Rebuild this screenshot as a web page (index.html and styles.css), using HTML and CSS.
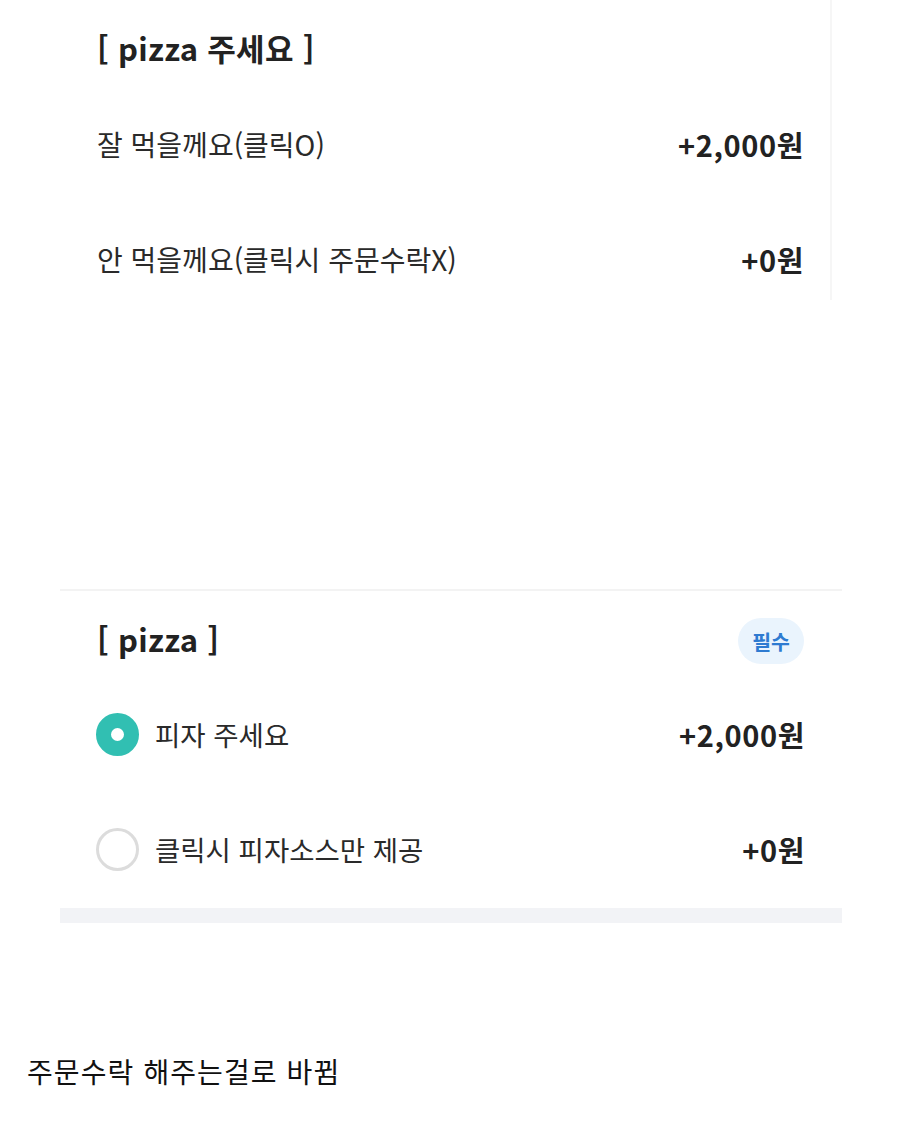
FILE: index.html
```html
<!DOCTYPE html>
<html lang="ko">
<head>
<meta charset="utf-8">
<link rel="stylesheet" href="styles.css">
</head>
<body>
<div class="page">
  <section class="shot shot-top">
    <h2 class="title">[ pizza 주세요 ]</h2>
    <div class="row row-first">
      <span class="label">잘 먹을께요(클릭O)</span>
      <span class="price">+2,000원</span>
    </div>
    <div class="row">
      <span class="label">안 먹을께요(클릭시 주문수락X)</span>
      <span class="price">+0원</span>
    </div>
  </section>

  <section class="shot shot-bottom">
    <div class="head">
      <h2 class="title">[ pizza ]</h2>
      <span class="badge">필수</span>
    </div>
    <div class="row radio-row">
      <span class="opt"><span class="radio on"></span><span class="label">피자 주세요</span></span>
      <span class="price">+2,000원</span>
    </div>
    <div class="row radio-row">
      <span class="opt"><span class="radio"></span><span class="label">클릭시 피자소스만 제공</span></span>
      <span class="price">+0원</span>
    </div>
    <div class="gray-bar"></div>
  </section>

  <p class="caption">주문수락 해주는걸로 바뀜</p>
</div>
</body>
</html>
```
FILE: styles.css
```css
html, body {
  margin: 0;
  padding: 0;
  background: #fff;
}
body {
  width: 900px;
  height: 1139px;
  overflow: hidden;
  font-family: "Noto Sans CJK KR", "Noto Sans", sans-serif;
  color: #222;
}
.page {
  display: flex;
  flex-direction: column;
}
.shot-top {
  width: 832px;
  height: 300px;
  box-sizing: border-box;
  padding: 24px 27px 0 97px;
  border-right: 2px solid #f6f6f6;
}
.title {
  margin: 0;
  font-size: 31px;
  font-weight: 700;
  line-height: 48px;
  letter-spacing: 0.3px;
  color: #222;
}
.row {
  display: flex;
  justify-content: space-between;
  align-items: center;
  height: 40px;
}
.shot-top .row-first {
  margin-top: 52px;
}
.shot-top .row + .row {
  margin-top: 75px;
}
.label {
  font-size: 28px;
  font-weight: 400;
  color: #2a2a2a;
}
.radio-row .label {
  font-size: 27.5px;
}
.price {
  font-size: 29px;
  font-weight: 700;
  color: #222;
  letter-spacing: 0.6px;
  margin-right: -1px;
}
.shot-bottom {
  margin-top: 289px;
  margin-left: 60px;
  width: 782px;
  border-top: 2px solid #f3f3f3;
  box-sizing: border-box;
}
.head {
  display: flex;
  justify-content: space-between;
  align-items: center;
  height: 46px;
  margin-top: 27px;
  padding: 0 38px 0 37px;
}
.head .title {
  margin-top: -4px;
}
.badge {
  display: inline-flex;
  align-items: center;
  justify-content: center;
  width: 66px;
  height: 46px;
  border-radius: 23px;
  background: #eaf4fd;
  color: #2e7bd1;
  font-size: 20.5px;
  font-weight: 700;
}
.radio-row {
  height: 44px;
  padding: 0 38px 0 36px;
}
.head + .radio-row {
  margin-top: 48px;
}
.radio-row + .radio-row {
  margin-top: 71px;
}
.opt {
  display: flex;
  align-items: center;
  gap: 16px;
}
.radio {
  width: 43px;
  height: 43px;
  box-sizing: border-box;
  border-radius: 50%;
  border: 3px solid #dcdcdc;
  background: #fff;
  flex: none;
}
.radio.on {
  border: 15px solid #31bfb2;
  background: #fff;
}
.gray-bar {
  margin-top: 37px;
  height: 15px;
  background: #f2f3f6;
}
.caption {
  margin: 128px 0 0 27px;
  font-size: 28px;
  font-weight: 400;
  color: #111;
  line-height: 40px;
  letter-spacing: 1.1px;
}
```
